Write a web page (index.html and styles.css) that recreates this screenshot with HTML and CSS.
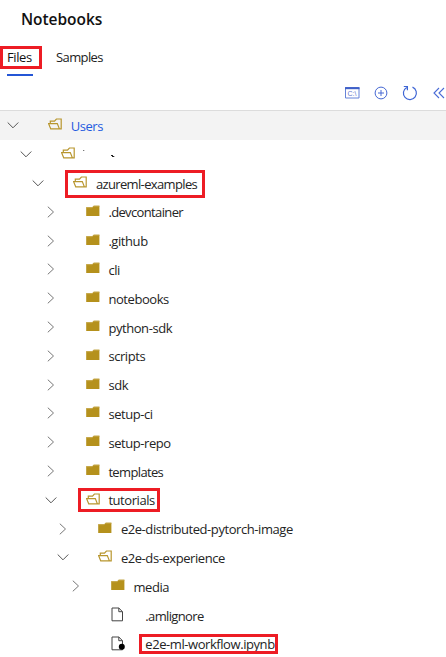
FILE: index.html
```html
<!DOCTYPE html>
<html lang="en">
<head>
<meta charset="utf-8">
<title>Notebooks</title>
<link rel="stylesheet" href="styles.css">
</head>
<body>
<svg class="defs" width="0" height="0">
  <symbol id="down" viewBox="0 0 12 12"><path d="M.7 3.5 6 8.8l5.300-5.300" fill="none" stroke="#555" stroke-width="1"/></symbol>
  <symbol id="right" viewBox="0 0 12 12"><path d="M2.800.7 8.500 6l-5.700 5.300" fill="none" stroke="#777" stroke-width="1"/></symbol>
  <symbol id="open" viewBox="0 0 14 12"><path d="M2.700 10.800.6 5.600h8.700l2.100 5.200zM2.300 5.400V3.200h4.200L8.400 1h4.800v9.800h-1.800" fill="none" stroke="#b8962e" stroke-width="1.200"/></symbol>
  <symbol id="folder" viewBox="0 0 14 12"><path d="M.2 2.200h5.900L7.600.7h5.800V11H.2z" fill="#b5911c"/><path d="M.2 2.700h6.100l1.500-1.500h5.600" fill="none" stroke="#c6a84c" stroke-width=".9"/></symbol>
  <symbol id="file" viewBox="0 0 14 15"><path d="M1 1h6.800l3.700 3.700v9.100H1zM7.800 1v3.700h3.700" fill="#fff" stroke="#444" stroke-width="1"/></symbol>
  <symbol id="notebook" viewBox="0 0 14 15"><path d="M1 1h6.800l3.700 3.700v9.100H1zM7.800 1v3.700h3.700" fill="#fff" stroke="#444" stroke-width="1"/><circle cx="10.800" cy="10.800" r="3" fill="#000"/></symbol>
</svg>
<header class="header">
  <h1 class="title">Notebooks</h1>
  <nav class="tabs">
    <a class="tab active marked mark-files">Files</a>
    <a class="tab samples">Samples</a>
  </nav>
  <div class="toolbar">
    <svg width="16" height="14" viewBox="0 0 16 14"><path d="M1.500 1.500h13.500v10.500H1.500z" fill="#fff" stroke="#6683d8"/><path d="M1 2.200h14.500" stroke="#3f60c8" stroke-width="2"/><text class="prompt" x="3.500" y="9.800">C:\</text></svg>
    <svg width="14" height="14" viewBox="0 0 14 14" fill="none" stroke="#4668d3"><circle cx="7" cy="7" r="5.900"/><path d="M7 4v6M4 7h6"/></svg>
    <svg width="16" height="16" viewBox="0 0 16 16" fill="none" stroke="#3f66d5" stroke-width="1.200"><path d="M10.500 2.100A6.500 6.500 0 1 1 4.700 2.400M1.800 1.500h3.600v3.700"/></svg>
    <svg width="14" height="14" viewBox="0 0 14 14" fill="none" stroke="#4a6bd6" stroke-width="1.100"><path d="M6 2 1 7l5 5M11 2 6 7l5 5"/></svg>
  </div>
</header>
<main class="tree">
  <div class="row l0 selected"><svg class="chev"><use href="#down"/></svg><svg class="icon"><use href="#open"/></svg><span class="name">Users</span></div>
  <div class="row l1"><svg class="chev"><use href="#down"/></svg><svg class="icon"><use href="#open"/></svg><svg class="traces" width="34" height="12" viewBox="0 0 34 12"><path d="M0 3h1.300v1H0z" fill="#777"/><path d="M28 8h2v1h1.300v1H29V9h-1z" fill="#222"/></svg></div>
  <div class="row l2 marked mark-examples"><svg class="chev"><use href="#down"/></svg><svg class="icon"><use href="#open"/></svg><span class="name tight">azureml-examples</span></div>
  <div class="row l3"><svg class="chev"><use href="#right"/></svg><svg class="icon"><use href="#folder"/></svg><span class="name tight">.devcontainer</span></div>
  <div class="row l3"><svg class="chev"><use href="#right"/></svg><svg class="icon"><use href="#folder"/></svg><span class="name">.github</span></div>
  <div class="row l3"><svg class="chev"><use href="#right"/></svg><svg class="icon"><use href="#folder"/></svg><span class="name">cli</span></div>
  <div class="row l3"><svg class="chev"><use href="#right"/></svg><svg class="icon"><use href="#folder"/></svg><span class="name">notebooks</span></div>
  <div class="row l3"><svg class="chev"><use href="#right"/></svg><svg class="icon"><use href="#folder"/></svg><span class="name">python-sdk</span></div>
  <div class="row l3"><svg class="chev"><use href="#right"/></svg><svg class="icon"><use href="#folder"/></svg><span class="name">scripts</span></div>
  <div class="row l3"><svg class="chev"><use href="#right"/></svg><svg class="icon"><use href="#folder"/></svg><span class="name">sdk</span></div>
  <div class="row l3"><svg class="chev"><use href="#right"/></svg><svg class="icon"><use href="#folder"/></svg><span class="name">setup-ci</span></div>
  <div class="row l3"><svg class="chev"><use href="#right"/></svg><svg class="icon"><use href="#folder"/></svg><span class="name">setup-repo</span></div>
  <div class="row l3"><svg class="chev"><use href="#right"/></svg><svg class="icon"><use href="#folder"/></svg><span class="name tight">templates</span></div>
  <div class="row l3 marked mark-tutorials"><svg class="chev"><use href="#down"/></svg><svg class="icon"><use href="#open"/></svg><span class="name">tutorials</span></div>
  <div class="row l4"><svg class="chev"><use href="#right"/></svg><svg class="icon"><use href="#folder"/></svg><span class="name">e2e-distributed-pytorch-image</span></div>
  <div class="row l4"><svg class="chev"><use href="#down"/></svg><svg class="icon"><use href="#open"/></svg><span class="name">e2e-ds-experience</span></div>
  <div class="row l5"><svg class="chev"><use href="#right"/></svg><svg class="icon"><use href="#folder"/></svg><span class="name">media</span></div>
  <div class="row l5 leaf"><svg class="page"><use href="#file"/></svg><span class="name tight">.amlignore</span></div>
  <div class="row l5 leaf marked mark-workflow"><svg class="page"><use href="#notebook"/></svg><span class="name">e2e-ml-workflow.ipynb</span></div>
</main>
</body>
</html>
```
FILE: styles.css
```css
*, *::after { box-sizing: border-box; }
body {
  margin: 0;
  height: 657px;
  overflow: hidden;
  background: #fff;
  color: #242424;
  font: 13px/18px "Open Sans", "Noto Sans", sans-serif;
}
svg { display: block; flex: none; }
.defs { position: absolute; }
.header {
  height: 111px;
  border-bottom: 1px solid #dcdcdc;
  display: flex;
  flex-direction: column;
}
.title {
  margin: 7px 0 0 21px;
  font-size: 15.5px;
  line-height: 24px;
  font-weight: 550;
  letter-spacing: -.05px;
  color: #111;
}
.tabs { display: flex; margin-top: 15px; height: 30px; }
.tab { padding-top: 2px; font-size: 13px; letter-spacing: -.4px; color: #222; }
.tab.active {
  margin-left: 7px;
  width: 26px;
  border-bottom: 2px solid #2456d6;
  color: #111;
}
.samples { margin-left: 23px; letter-spacing: -.6px; }
.toolbar { display: flex; align-items: center; height: 16px; margin: 9px 0 0 344px; }
.toolbar svg:nth-child(2) { margin-left: 14px; }
.toolbar svg:nth-child(3) { margin-left: 14px; }
.toolbar svg:nth-child(4) { margin-left: 15px; }
.prompt { font: 7px "Liberation Sans", sans-serif; fill: #6577cc; }
.row { display: flex; align-items: center; height: 28.8px; }
.selected { background: #f3f3f3; color: #1f5be0; }
.l0 { padding-left: 7px; }
.l1 { padding-left: 19.6px; }
.l2 { padding-left: 32.2px; }
.l3 { padding-left: 44.7px; }
.l4 { padding-left: 57.2px; }
.l5 { padding-left: 69.8px; }
.chev { width: 12px; height: 12px; }
.icon { width: 14px; height: 12px; margin: 0 8.7px 2px 29px; }
.traces { margin-bottom: 2px; }
.page { width: 14px; height: 15px; margin-left: 41px; }
.leaf .name { margin-left: 20.5px; }
.name { white-space: nowrap; letter-spacing: -.43px; padding-top: 1.4px; }
.name.tight { letter-spacing: -.64px; }
.samples { letter-spacing: -.6px; margin-left: 23px; }
.marked { position: relative; }
.marked::after { content: ""; position: absolute; border: 3px solid #ed1c24; }
.mark-files::after { left: -7px; top: 0; width: 42px; height: 23px; }
.mark-examples::after { left: 65px; top: 1.4px; width: 140px; height: 28px; }
.mark-tutorials::after { left: 78px; top: 2.6px; width: 82px; height: 24px; }
.mark-workflow::after { left: 139px; top: 4.6px; width: 139px; height: 20px; }
```
